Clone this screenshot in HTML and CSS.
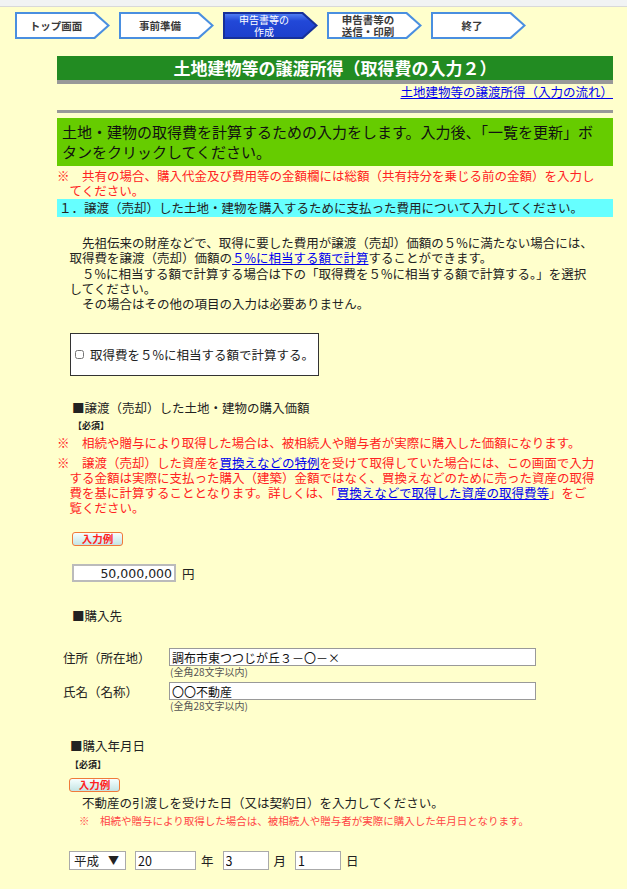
FILE: index.html
```html
<!DOCTYPE html>
<html lang="ja">
<head>
    <meta charset="UTF-8">
    <title>土地建物等の譲渡所得（取得費の入力２）</title>
    <link rel="stylesheet" href="styles.css">
</head>
<body>
    <div class="topbar"></div>
    <div class="steps">
        <div class="step"><div class="step-in">トップ画面</div></div>
        <div class="step"><div class="step-in">事前準備</div></div>
        <div class="step now"><div class="step-in">申告書等の<br>作成</div></div>
        <div class="step"><div class="step-in">申告書等の<br>送信・印刷</div></div>
        <div class="step"><div class="step-in">終了</div></div>
    </div>

    <div id="main">
        <h1 class="title">土地建物等の譲渡所得（取得費の入力２）</h1>
        <div class="flow"><a href="#">土地建物等の譲渡所得（入力の流れ）</a></div>
        <div class="rule"></div>

        <div class="guide">土地・建物の取得費を計算するための入力をします。入力後、「一覧を更新」ボ<br>タンをクリックしてください。</div>
        <p class="note">※　共有の場合、購入代金及び費用等の金額欄には総額（共有持分を乗じる前の金額）を入力し<br>てください。</p>
        <div class="section">１．譲渡（売却）した土地・建物を購入するために支払った費用について入力してください。</div>

        <p class="lead">　先祖伝来の財産などで、取得に要した費用が譲渡（売却）価額の５%に満たない場合には、<br>取得費を譲渡（売却）価額の<a href="#">５%に相当する額で計算</a>することができます。<br>　５%に相当する額で計算する場合は下の「取得費を５%に相当する額で計算する。」を選択<br>してください。<br>　その場合はその他の項目の入力は必要ありません。</p>

        <label class="five"><input type="checkbox" class="check">取得費を５%に相当する額で計算する。</label>

        <div class="head">■譲渡（売却）した土地・建物の購入価額</div>
        <div class="must">【必須】</div>
        <p class="note first">※　相続や贈与により取得した場合は、被相続人や贈与者が実際に購入した価額になります。</p>
        <p class="note second">※　譲渡（売却）した資産を<a href="#">買換えなどの特例</a>を受けて取得していた場合には、この画面で入力<br>する金額は実際に支払った購入（建築）金額ではなく、買換えなどのために売った資産の取得<br>費を基に計算することとなります。詳しくは、「<a href="#">買換えなどで取得した資産の取得費等</a>」をご<br>覧ください。</p>

        <button class="ex price-ex">入力例</button>
        <div class="price"><input type="text" class="amount" value="50,000,000"><span class="yen">円</span></div>

        <div class="head seller">■購入先</div>
        <div class="addr first-addr">
            <span class="addr-label">住所（所在地）</span>
            <div>
                <input type="text" class="addr-input" value="調布市東つつじが丘３－〇－×">
                <div class="hint">(全角28文字以内)</div>
            </div>
        </div>
        <div class="addr">
            <span class="addr-label">氏名（名称）</span>
            <div>
                <input type="text" class="addr-input" value="〇〇不動産">
                <div class="hint">(全角28文字以内)</div>
            </div>
        </div>

        <div class="head date-head">■購入年月日</div>
        <div class="must date-must">【必須】</div>
        <button class="ex date-ex">入力例</button>
        <p class="date-text">不動産の引渡しを受けた日（又は契約日）を入力してください。</p>
        <p class="small-note">※　相続や贈与により取得した場合は、被相続人や贈与者が実際に購入した年月日となります。</p>

        <div class="date-row">
            <span class="era">平成<span class="era-arrow">▼</span></span>
            <input type="text" class="date-in year" value="20"><span class="unit">年</span>
            <input type="text" class="date-in" value="3"><span class="unit">月</span>
            <input type="text" class="date-in" value="1"><span class="unit">日</span>
        </div>
    </div>
</body>
</html>
```

FILE: styles.css
```css
body{
    margin: 0;
    background-color: #ffffcc;
    font-family: "Noto Sans CJK JP", sans-serif;
    color: #222;
}
a{
    color: #0000ee;
}
.topbar{
    height: 6px;
    background-color: #f1f3f4;
    border-bottom: 1px solid #d9d9d9;
}

/* steps */
.steps{
    display: flex;
    gap: 9px;
    padding: 5px 0 0 15px;
}
.step{
    width: 95px;
    height: 27px;
    padding: 2px;
    box-sizing: border-box;
    background-color: #4a8fe0;
    clip-path: polygon(0 0, 80px 0, 95px 13.5px, 80px 27px, 0 27px);
}
.step-in{
    height: 100%;
    display: flex;
    align-items: center;
    justify-content: center;
    padding-right: 13px;
    background-color: #fff;
    clip-path: polygon(0 0, 77px 0, 90px 11.5px, 77px 23px, 0 23px);
    font-size: 10.5px;
    font-weight: bold;
    line-height: 12px;
    color: #3a3a3a;
    text-align: center;
}
.step.now{
    background-color: #17309a;
}
.step.now .step-in{
    background: linear-gradient(#4f7cf2, #2248d8 30%, #1d3fcc);
    color: #fff;
    font-weight: normal;
    font-size: 10px;
}

/* main */
#main{
    width: 556px;
    margin: 17px 0 0 57px;
    font-size: 12.5px;
    line-height: 15px;
}
.title{
    margin: 0;
    height: 24px;
    line-height: 24px;
    background-color: #228b22;
    border-bottom: 4px solid #999;
    color: #fff;
    font-size: 17px;
    font-weight: bold;
    text-align: center;
}
.flow{
    text-align: right;
    line-height: 16px;
}
.rule{
    height: 3px;
    margin-top: 10px;
    background-color: #999;
}
.guide{
    margin-top: 5px;
    padding: 4px 5px;
    background-color: #66cc00;
    font-size: 15px;
    line-height: 20px;
    color: #111;
}
.note{
    margin: 2px 0 0;
    padding-left: 12.5px;
    text-indent: -12.5px;
    color: #f22;
}
.section{
    margin-top: 1px;
    height: 18px;
    line-height: 18px;
    padding-left: 2px;
    background-color: #66ffff;
}
.lead{
    margin: 18px 0 0;
    padding-left: 12.5px;
    line-height: 15.25px;
}
.five{
    display: flex;
    align-items: center;
    width: 249px;
    height: 43px;
    margin: 22px 0 0 13px;
    padding-left: 4px;
    box-sizing: border-box;
    border: 1px solid #333;
    background-color: #fff;
}
.check{
    width: 9px;
    height: 9px;
    margin: 0 6px 0 0;
}
.head{
    margin: 24px 0 0 15px;
    line-height: 16px;
}
.must{
    margin: 4px 0 0 16px;
    font-size: 9px;
    font-weight: bold;
    line-height: 12px;
}
.note.first{
    margin-top: 3px;
}
.note.second{
    margin-top: 5px;
}
.ex{
    display: block;
    width: 51px;
    height: 14px;
    padding: 0;
    border: 1px solid #f07a3a;
    border-radius: 3px;
    background: linear-gradient(#f6ffff, #c4e4e4);
    color: #f22;
    font-family: "Noto Sans CJK JP", sans-serif;
    font-size: 10.5px;
    font-weight: bold;
    line-height: 12px;
}
.price-ex{
    margin: 17px 0 0 15px;
}
.price{
    display: flex;
    align-items: center;
    margin: 18px 0 0 15px;
}
.amount{
    width: 104px;
    height: 18px;
    padding: 0 2px;
    box-sizing: border-box;
    border: 2px solid #bbb;
    background-color: #fff;
    font-family: "DejaVu Sans", sans-serif;
    font-size: 12.5px;
    text-align: right;
    color: #222;
}
.yen{
    margin-left: 6px;
}
.head.seller{
    margin-top: 26px;
}
.addr{
    display: flex;
    margin: 5px 0 0 6px;
}
.addr.first-addr{
    margin-top: 24px;
}
.addr-label{
    width: 106px;
    line-height: 20px;
}
.addr-input{
    display: block;
    width: 367px;
    height: 18px;
    padding: 0 2px;
    box-sizing: border-box;
    border: 1px solid #999;
    background-color: #fff;
    font-family: "Noto Sans CJK JP", sans-serif;
    font-size: 12px;
    color: #111;
}
.hint{
    padding-left: 1px;
    font-size: 10px;
    line-height: 11px;
    color: #555;
}
.head.date-head{
    margin-top: 27px;
    margin-left: 13px;
}
.must.date-must{
    margin-top: 5px;
    margin-left: 13px;
}
.date-ex{
    margin: 7px 0 0 12px;
}
.date-text{
    margin: 3px 0 0 25px;
}
.small-note{
    margin: 4px 0 0 22px;
    font-size: 10.5px;
    line-height: 13px;
    color: #f44;
}
.date-row{
    display: flex;
    align-items: center;
    margin: 24px 0 0 12px;
}
.era{
    display: flex;
    align-items: center;
    width: 57px;
    height: 19px;
    padding-left: 4px;
    box-sizing: border-box;
    border: 1px solid #aaa;
    background-color: #fff;
}
.era-arrow{
    margin-left: 9px;
    font-size: 11px;
}
.date-in{
    width: 46px;
    height: 19px;
    margin-left: 9px;
    padding: 0 2px;
    box-sizing: border-box;
    border: 1px solid #aaa;
    background-color: #fff;
    font-family: "Noto Sans CJK JP", sans-serif;
    font-size: 12.5px;
    color: #111;
}
.date-in.year{
    width: 61px;
    margin-left: 9px;
}
.unit{
    margin-left: 5px;
}
```
